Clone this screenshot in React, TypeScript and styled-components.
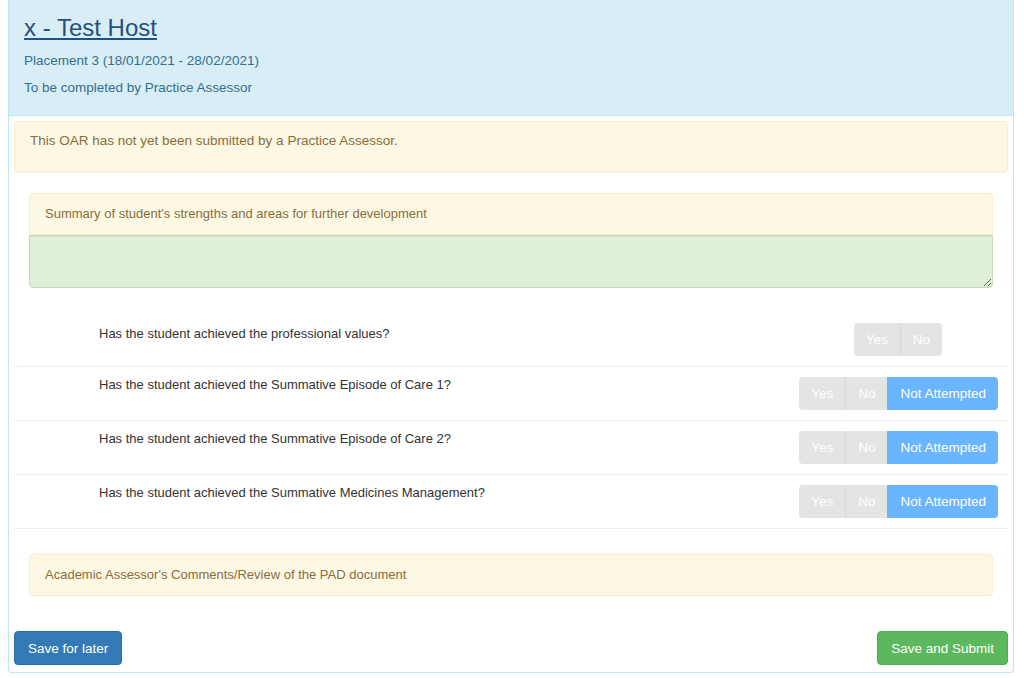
import React from "react";
import styled, { createGlobalStyle } from "styled-components";

const Global = createGlobalStyle`
  body { margin: 0; font-family: "Liberation Sans", Arial, sans-serif; font-size: 13px; color: #333; background: #fff; }
  * { box-sizing: border-box; }
`;

const Panel = styled.div`
  margin: 0 8px; width: 1006px; height: 673px;
  border: 1px solid #bce8f1; border-top: none; border-radius: 0 0 4px 4px;
  display: flex; flex-direction: column;
`;
const Heading = styled.div`
  background: #d9edf7; color: #31708f; height: 116px; padding: 14px 15px 0 15px;
  border-bottom: 1px solid #bce8f1;
`;
const Title = styled.a`
  font-size: 24px; color: #23527c; text-decoration: underline; display: block; line-height: 28px;
`;
const Sub = styled.div`
  font-size: 13.5px; line-height: 18px; margin-top: ${(p: { mt: number }) => p.mt}px;
`;
const Body = styled.div`
  padding: 5px 5px 0 5px; flex: 1; display: flex; flex-direction: column;
`;
const Alert = styled.div`
  background: #fcf8e3; border: 1px solid #faebcc; color: #8a6d3b; border-radius: 4px;
  height: 51px; padding: 11px 15px; font-size: 13.5px; box-shadow: 0 1px 1px rgba(0,0,0,.05);
`;
const Section = styled.div`
  margin: 21px 15px 0 15px;
`;
const Note = styled.div`
  background: #fcf8e3; border: 1px solid #faebcc; color: #8a6d3b; border-radius: 4px 4px 0 0;
  height: 42px; padding: 12px 15px; font-size: 13px;
`;
const NoteBox = styled(Note)`
  border-radius: 4px; margin-top: 0;
`;
const Area = styled.textarea`
  display: block; width: 100%; height: 53px; background: #dff0d8; border: 1px solid #c3d9b9;
  border-radius: 0 0 4px 4px; resize: vertical; box-shadow: inset 0 1px 1px rgba(0,0,0,.075);
`;
const Questions = styled.div`
  margin-top: 23px; border-bottom: 1px solid #eee;
`;
const Row = styled.div<{ first?: boolean }>`
  display: flex; align-items: flex-start; justify-content: space-between;
  height: ${(p) => (p.first ? 55 : 54)}px; padding: ${(p) => (p.first ? "15px" : "10px")} 10px 0 85px;
  border-top: ${(p) => (p.first ? "none" : "1px solid #eee")};
`;
const QText = styled.div`
  font-size: 13px; line-height: 16px; margin-top: ${(p: { first?: boolean }) => (p.first ? 0 : 0)}px;
`;
const Group = styled.div<{ narrow?: boolean }>`
  display: flex; margin-right: ${(p) => (p.narrow ? 56 : 0)}px; margin-top: ${(p) => (p.narrow ? -3 : 0)}px;
`;
const Seg = styled.button<{ on?: boolean }>`
  font-family: inherit; font-size: 13.5px; height: 33px; padding: 0 12px; border: none;
  background: ${(p) => (p.on ? "#6ab5ff" : "#e4e4e4")}; color: #fff;
  border-left: 1px solid ${(p) => (p.on ? "#6ab5ff" : "#d8d8d8")};
  &:first-child { border-left: none; border-radius: 4px 0 0 4px; }
  &:last-child { border-radius: 0 4px 4px 0; }
`;
const Footer = styled.div`
  display: flex; justify-content: space-between; margin-top: 35px;
`;
const Btn = styled.button<{ c: string; b: string }>`
  font-family: inherit; font-size: 13.5px; height: 34px; padding: 0 13px; color: #fff;
  background: ${(p) => p.c}; border: 1px solid ${(p) => p.b}; border-radius: 4px;
`;

const qs = [
  "Has the student achieved the Summative Episode of Care 1?",
  "Has the student achieved the Summative Episode of Care 2?",
  "Has the student achieved the Summative Medicines Management?",
];

export default function App() {
  return (
    <>
      <Global />
      <Panel>
        <Heading>
          <Title>x - Test Host</Title>
          <Sub mt={10}>Placement 3 (18/01/2021 - 28/02/2021)</Sub>
          <Sub mt={9}>To be completed by Practice Assessor</Sub>
        </Heading>
        <Body>
          <Alert>This OAR has not yet been submitted by a Practice Assessor.</Alert>
          <Section>
            <Note>Summary of student's strengths and areas for further development</Note>
            <Area />
          </Section>
          <Questions>
            <Row first>
              <QText>Has the student achieved the professional values?</QText>
              <Group narrow>
                <Seg>Yes</Seg>
                <Seg>No</Seg>
              </Group>
            </Row>
            {qs.map((q) => (
              <Row key={q}>
                <QText>{q}</QText>
                <Group>
                  <Seg>Yes</Seg>
                  <Seg>No</Seg>
                  <Seg on>Not Attempted</Seg>
                </Group>
              </Row>
            ))}
          </Questions>
          <Section style={{ marginTop: 25 }}>
            <NoteBox>Academic Assessor's Comments/Review of the PAD document</NoteBox>
          </Section>
          <Footer>
            <Btn c="#337ab7" b="#2e6da4">Save for later</Btn>
            <Btn c="#5cb85c" b="#4cae4c">Save and Submit</Btn>
          </Footer>
        </Body>
      </Panel>
    </>
  );
}
